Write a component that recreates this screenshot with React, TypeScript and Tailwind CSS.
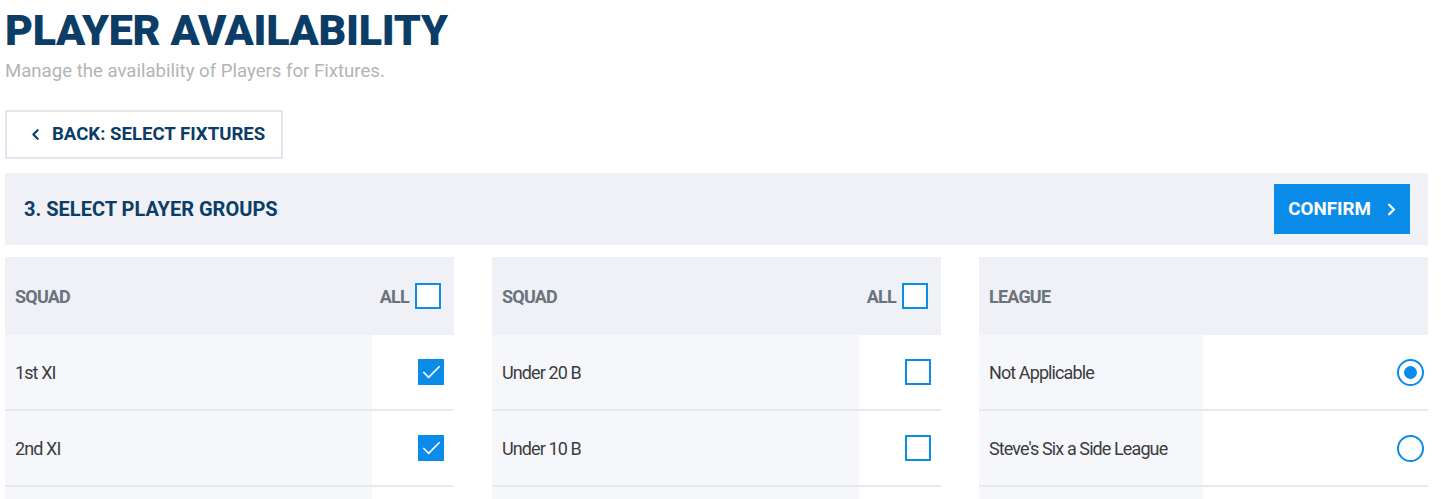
import { ChevronLeft, ChevronRight, Check } from 'lucide-react'

type Row = { label: string; checked: boolean }

const cond = { fontFamily: 'Roboto, "DejaVu Sans Condensed", sans-serif' }

function Box({ checked }: { checked: boolean }) {
  return checked ? (
    <span className="flex h-[26px] w-[26px] items-center justify-center bg-[#0b8ce9]">
      <Check className="h-[23px] w-[23px] text-white" strokeWidth={1.8} />
    </span>
  ) : (
    <span className="block h-[26px] w-[26px] border-2 border-[#0b8ce9] bg-white" />
  )
}

function Radio({ checked }: { checked: boolean }) {
  return (
    <span className="flex h-[27px] w-[27px] items-center justify-center rounded-full border-2 border-[#0b8ce9] bg-white">
      {checked && <span className="block h-[13px] w-[13px] rounded-full bg-[#0b8ce9]" />}
    </span>
  )
}

function SquadColumn({ rows }: { rows: Row[] }) {
  return (
    <div className="flex-1">
      <div className="flex h-[78px] items-center justify-between bg-[#eff1f6] pl-[10px] pr-[13px]">
        <span className="text-[18px] font-bold tracking-[-0.8px] text-[#6b737d]" style={cond}>SQUAD</span>
        <span className="flex items-center gap-[6px]">
          <span className="text-[18px] font-bold tracking-[-0.8px] text-[#6b737d]" style={cond}>ALL</span>
          <Box checked={false} />
        </span>
      </div>
      {rows.map((r, i) => (
        <div key={i} className="flex h-[76px] border-b-2 border-[#e9e9eb]">
          <div className="flex flex-1 items-center bg-[#f6f7fb] pl-[10px] text-[18px] tracking-[-0.9px] text-[#3c3c40]" style={cond}>
            {r.label}
          </div>
          <div className="flex w-[82px] items-center justify-end bg-white pr-[10px]">
            {r.label && <Box checked={r.checked} />}
          </div>
        </div>
      ))}
    </div>
  )
}

export default function App() {
  const leagues = [
    { label: 'Not Applicable', checked: true },
    { label: "Steve's Six a Side League", checked: false },
    { label: '', checked: false },
  ]

  return (
    <div className="min-h-screen bg-white px-[5px] pr-[13px]" style={{ fontFamily: 'Roboto, sans-serif' }}>
      <h1 className="pt-[4px] text-[43px] font-black leading-[52px] tracking-[-0.3px] text-[#0b3d66]">PLAYER AVAILABILITY</h1>
      <p className="mt-[3px] text-[18.6px] leading-[24px] text-[#b4b4b4]">Manage the availability of Players for Fixtures.</p>

      <button className="mt-[27px] flex h-[49px] w-[278px] items-center gap-[8px] border-2 border-[#e3e6ef] bg-white pl-[20px] text-[18.6px] font-bold text-[#0b3d66]">
        <ChevronLeft className="h-[17px] w-[17px]" strokeWidth={3} />
        BACK: SELECT FIXTURES
      </button>

      <div className="mt-[14px] flex h-[72px] items-center justify-between bg-[#eff1f6] pl-[19px] pr-[18px]">
        <h2 className="text-[20px] font-bold text-[#0b3d66]">3. SELECT PLAYER GROUPS</h2>
        <button className="flex h-[50px] w-[136px] items-center justify-end gap-[11px] bg-[#0b8ce9] pr-[9px] text-[18.8px] font-bold text-white">
          CONFIRM
          <ChevronRight className="h-[19px] w-[19px]" strokeWidth={3} />
        </button>
      </div>

      <div className="mt-[12px] flex gap-[38px]">
        <SquadColumn
          rows={[
            { label: '1st XI', checked: true },
            { label: '2nd XI', checked: true },
            { label: '', checked: false },
          ]}
        />
        <SquadColumn
          rows={[
            { label: 'Under 20 B', checked: false },
            { label: 'Under 10 B', checked: false },
            { label: '', checked: false },
          ]}
        />
        <div className="flex-1">
          <div className="flex h-[78px] items-center bg-[#eff1f6] pl-[10px]">
            <span className="text-[18px] font-bold tracking-[-0.8px] text-[#6b737d]" style={cond}>LEAGUE</span>
          </div>
          {leagues.map((r, i) => (
            <div key={i} className="flex h-[76px] border-b-2 border-[#e9e9eb]">
              <div className="flex w-[224px] items-center bg-[#f6f7fb] pl-[10px] text-[18px] tracking-[-0.9px] text-[#3c3c40]" style={cond}>
                {r.label}
              </div>
              <div className="flex flex-1 items-center justify-end bg-white pr-[4px]">
                {r.label && <Radio checked={r.checked} />}
              </div>
            </div>
          ))}
        </div>
      </div>
    </div>
  )
}
